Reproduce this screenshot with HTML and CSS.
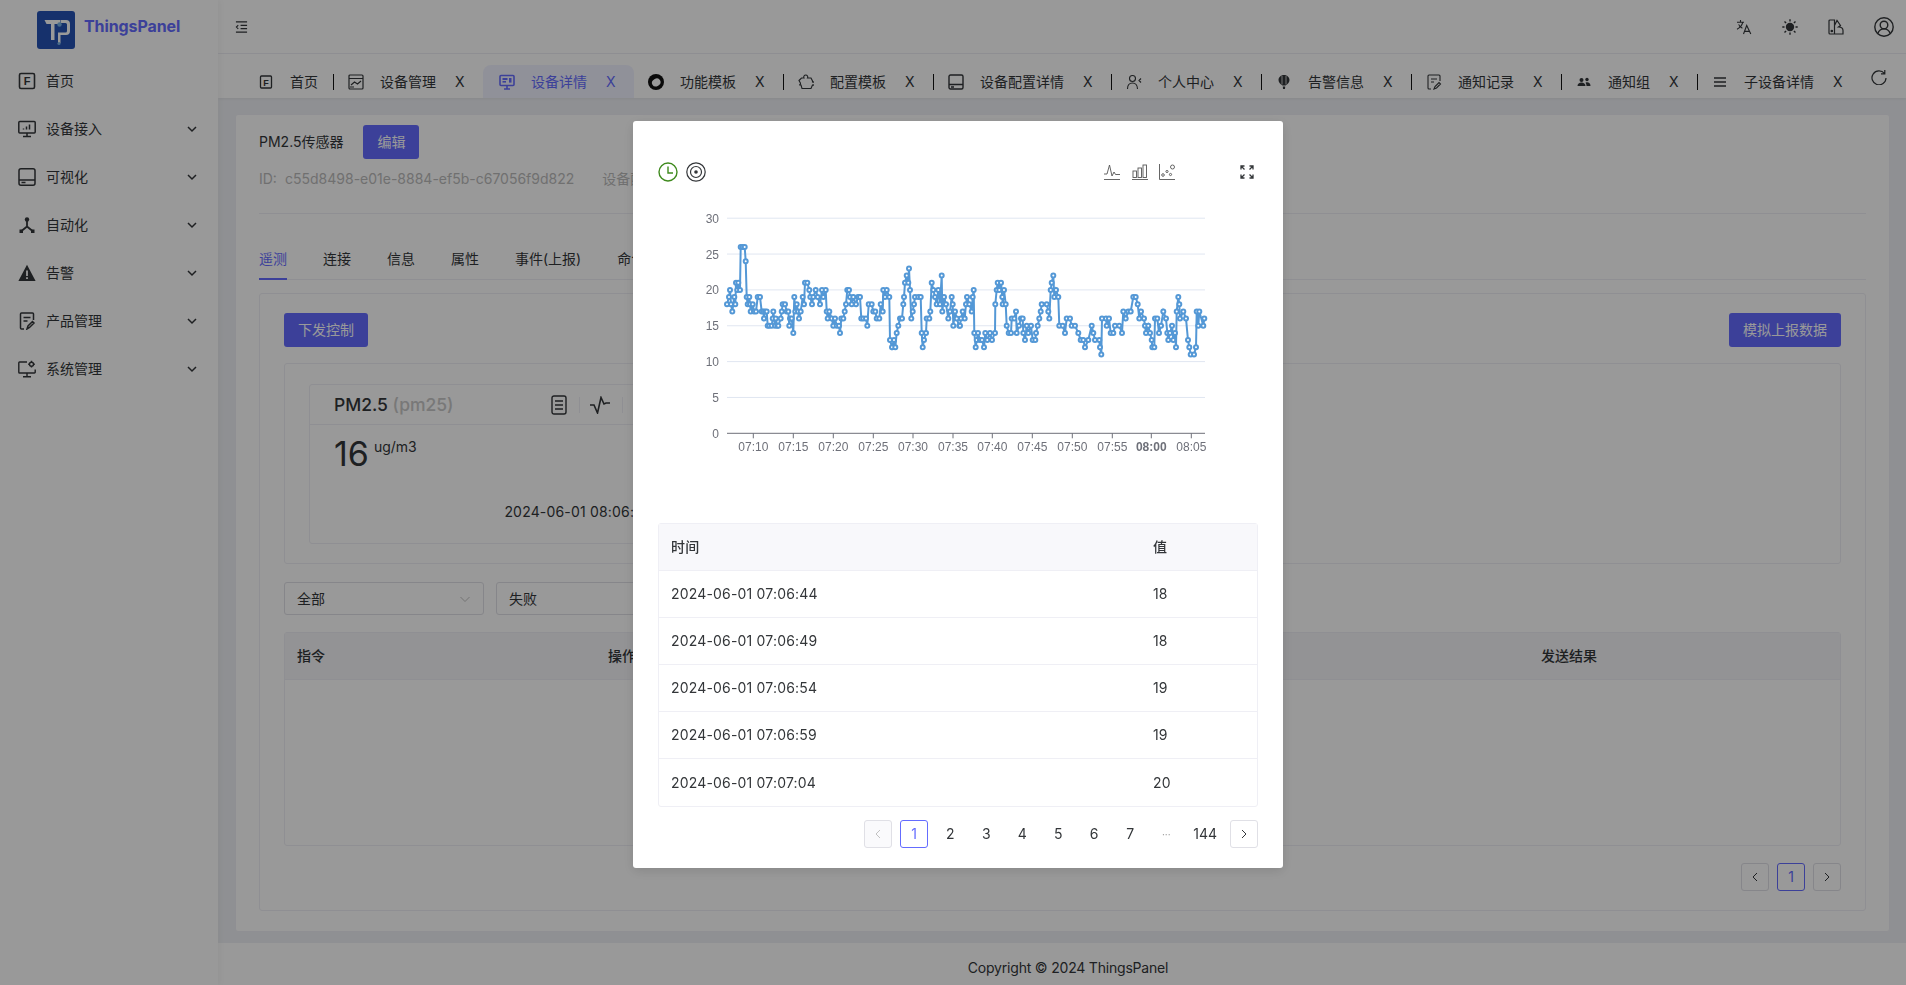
FILE: index.html
```html
<!DOCTYPE html>
<html lang="zh-CN">
<head>
    <meta charset="UTF-8">
    <meta name="viewport" content="width=device-width, initial-scale=1.0">
    <title>ThingsPanel</title>
    <link rel="stylesheet" href="styles.css">
</head>
<body>
<div class="app">
    <aside class="sidebar">
        <div class="brand">
            <svg class="brand-logo" viewBox="0 0 38 38">
                <rect width="38" height="38" rx="3" fill="#2553b5"/>
                <path d="M7.5 9H23V13H17.500V29H14V13H9.500z" fill="#fff"/>
                <path d="M23.5 9H29a4 4 0 0 1 4 4v7a4 4 0 0 1-4 4H23.500v8H21V21.500H28.500a1.500 1.500 0 0 0 1.500-1.500V13.500a1.500 1.500 0 0 0-1.500-1.500H23.500z" fill="#fff"/>
                <circle cx="22.5" cy="13.5" r="2.2" fill="#7ab4e6"/>
                <circle cx="22" cy="32.5" r="1.6" fill="#7ab4e6"/>
            </svg>
            <span class="brand-name">ThingsPanel</span>
        </div>
        <nav class="menu">
            <div class="menu-item">
                <svg class="menu-ico" viewBox="0 0 18 18"><rect x="1.5" y="1.5" width="15" height="15" rx="1.5" fill="none" stroke="currentColor" stroke-width="1.6"/><text x="9" y="13" text-anchor="middle" class="ico-letter">F</text></svg>
                <span>首页</span>
            </div>
            <div class="menu-item">
                <svg class="menu-ico" viewBox="0 0 18 18" fill="none" stroke="currentColor" stroke-width="1.5"><rect x="0.8" y="1.5" width="16.4" height="11.5" rx="1"/><path d="M9 13v3M5 16.6h8M5.5 9.5v-1M8.5 9.5v-3M11.5 9.5v-5"/></svg>
                <span>设备接入</span>
                <svg class="chev" viewBox="0 0 12 12"><path d="M2 4l4 4 4-4" fill="none" stroke="currentColor" stroke-width="1.5"/></svg>
            </div>
            <div class="menu-item">
                <svg class="menu-ico" viewBox="0 0 18 18" fill="none" stroke="currentColor" stroke-width="1.5"><rect x="1" y="0.8" width="16" height="16.4" rx="2"/><path d="M1 12h16M3.5 14.6h4"/></svg>
                <span>可视化</span>
                <svg class="chev" viewBox="0 0 12 12"><path d="M2 4l4 4 4-4" fill="none" stroke="currentColor" stroke-width="1.5"/></svg>
            </div>
            <div class="menu-item">
                <svg class="menu-ico" viewBox="0 0 18 18"><circle cx="9" cy="3.5" r="2.2" fill="currentColor"/><path d="M9 5v5.5L3.5 15M9 10.5l5.5 4.5" fill="none" stroke="currentColor" stroke-width="1.8"/><rect x="1.5" y="13.5" width="3.5" height="3.5" fill="currentColor"/><rect x="13" y="13.5" width="3.5" height="3.5" fill="currentColor"/></svg>
                <span>自动化</span>
                <svg class="chev" viewBox="0 0 12 12"><path d="M2 4l4 4 4-4" fill="none" stroke="currentColor" stroke-width="1.5"/></svg>
            </div>
            <div class="menu-item">
                <svg class="menu-ico" viewBox="0 0 18 18"><path fill-rule="evenodd" fill="currentColor" d="M9 0.8L17.6 17H0.4zM8.1 6.5v5.5h1.8V6.5zM8.1 13.2v1.8h1.8v-1.8z"/></svg>
                <span>告警</span>
                <svg class="chev" viewBox="0 0 12 12"><path d="M2 4l4 4 4-4" fill="none" stroke="currentColor" stroke-width="1.5"/></svg>
            </div>
            <div class="menu-item">
                <svg class="menu-ico" viewBox="0 0 18 18" fill="none" stroke="currentColor" stroke-width="1.5"><path d="M6 17H3.5a1 1 0 0 1-1-1V2a1 1 0 0 1 1-1h11a1 1 0 0 1 1 1v6M5.5 5.5h7M5.5 9h4M9 17l1-3 4.5-4.5 1.5 1.5-4.5 4.5z"/></svg>
                <span>产品管理</span>
                <svg class="chev" viewBox="0 0 12 12"><path d="M2 4l4 4 4-4" fill="none" stroke="currentColor" stroke-width="1.5"/></svg>
            </div>
            <div class="menu-item">
                <svg class="menu-ico" viewBox="0 0 18 18" fill="none" stroke="currentColor" stroke-width="1.4"><path d="M9 2H1.6a.8.8 0 0 0-.8.8v9.4a.8.8 0 0 0 .8.8h14.8a.8.8 0 0 0 .8-.8V9.5M9 13v3.2M5 16.8h8"/><circle cx="13.5" cy="4.2" r="2"/><path d="M13.5 0.8v1.2M13.5 6.4v1.2M10.2 4.2h1.2M15.6 4.2h1.2"/></svg>
                <span>系统管理</span>
                <svg class="chev" viewBox="0 0 12 12"><path d="M2 4l4 4 4-4" fill="none" stroke="currentColor" stroke-width="1.5"/></svg>
            </div>
        </nav>
    </aside>

    <div class="main">
        <header class="topbar">
            <svg class="top-toggle" viewBox="0 0 14 14" fill="none" stroke="currentColor" stroke-width="1.2"><path d="M1 1.5h12M6 5.2h7M6 8.8h7M1 12.5h12M3.5 5L1.5 7l2 2"/></svg>
            <div class="top-actions">
                <svg class="top-ico" viewBox="0 0 16 16" fill="none" stroke="currentColor" stroke-width="1.1"><path d="M1 3.2h7M4.5 1v2.2M6.8 3.2C6 6.5 4 8.8 1 10.2M2.6 5.4c.8 1.8 2 3 3.8 3.9M7.5 15l3.2-8.5L14.8 15M8.7 12.4h4.9"/></svg>
                <svg class="top-ico" viewBox="0 0 16 16"><circle cx="8" cy="8" r="4.2" fill="currentColor"/><path d="M8 .3v2.2M8 13.5v2.2M.3 8h2.2M13.5 8h2.2M2.5 2.5l1.6 1.6M11.9 11.9l1.6 1.6M2.5 13.5l1.6-1.600M11.9 4.100l1.6-1.600" stroke="currentColor" stroke-width="1.4"/></svg>
                <svg class="top-ico" viewBox="0 0 16 16" fill="none" stroke="currentColor" stroke-width="1.2"><path d="M6.5 1H2a1 1 0 0 0-1 1v12a1 1 0 0 0 1 1h4.5zM6.5 6.5L9 1.5l3.5 5L10.5 8c2.5 0 4.5 1 4.5 3.5V15H6.5"/><circle cx="3.8" cy="12" r=".7" fill="currentColor"/></svg>
                <svg class="top-user" viewBox="0 0 20 20" fill="none" stroke="currentColor" stroke-width="1.4"><circle cx="10" cy="10" r="9.2"/><circle cx="10" cy="8" r="3.8"/><path d="M3.8 16.5c1.2-3 3.4-4.6 6.2-4.6s5 1.6 6.2 4.6"/></svg>
            </div>
        </header>

        <div class="tabbar">
            <div class="tab tab-first">
                <svg class="tab-ico" viewBox="0 0 16 16"><rect x="2.5" y="2" width="11" height="12" rx="1" fill="none" stroke="currentColor" stroke-width="1.3"/><text x="8" y="11.5" text-anchor="middle" class="ico-letter small">F</text></svg>
                <span>首页</span>
            </div>
            <div class="tab">
                <svg class="tab-ico" viewBox="0 0 16 16" fill="none" stroke="currentColor" stroke-width="1.2"><rect x="1" y="1" width="14" height="14" rx="1"/><path d="M1 4.5h14M3 11l3.5-3 3 2 3.5-3M2 13h4"/></svg>
                <span>设备管理</span>
                <span class="tab-x">X</span>
            </div>
            <div class="tab tab-active">
                <svg class="tab-ico" viewBox="0 0 16 16"><rect x="1" y="1.5" width="14" height="10" rx="1" fill="none" stroke="currentColor" stroke-width="1.6"/><rect x="3.5" y="4" width="5" height="2" fill="currentColor"/><rect x="3.5" y="7" width="3.5" height="1.6" fill="currentColor"/><rect x="10" y="4" width="2.5" height="4.6" fill="currentColor"/><path d="M8 11.5v3M5 15h6" stroke="currentColor" stroke-width="1.6"/></svg>
                <span>设备详情</span>
                <span class="tab-x">X</span>
            </div>
            <div class="tab">
                <svg class="tab-ico" viewBox="0 0 16 16"><circle cx="8" cy="8" r="8" fill="#111"/><ellipse cx="8" cy="8.5" rx="4.4" ry="3.8" fill="#fff" transform="rotate(-30 8 8)"/></svg>
                <span>功能模板</span>
                <span class="tab-x">X</span>
            </div>
            <div class="tab">
                <svg class="tab-ico" viewBox="0 0 16 16" fill="none" stroke="currentColor" stroke-width="1.1"><path d="M1 6.5L3.5 4H6a2 2 0 1 1 3.5 0H13l1.5 3v1a1.6 1.6 0 1 1 0 3L13 14.5H4l-1-3.5H1.2a1.6 1.6 0 0 0 1.2-2z"/></svg>
                <span>配置模板</span>
                <span class="tab-x">X</span>
            </div>
            <div class="tab">
                <svg class="tab-ico" viewBox="0 0 16 16" fill="none" stroke="currentColor" stroke-width="1.4"><rect x="1" y="1" width="14" height="14" rx="1.5"/><path d="M1 10.5h14M3 13h3"/></svg>
                <span>设备配置详情</span>
                <span class="tab-x">X</span>
            </div>
            <div class="tab">
                <svg class="tab-ico" viewBox="0 0 16 16" fill="none" stroke="currentColor" stroke-width="1.1"><circle cx="6.5" cy="4.5" r="3"/><path d="M1.5 15c0-4 2-6 5-6s5 2 5 6M15 4.5l-2 2 2 2"/></svg>
                <span>个人中心</span>
                <span class="tab-x">X</span>
            </div>
            <div class="tab">
                <svg class="tab-ico" viewBox="0 0 16 16"><path fill="currentColor" d="M8 1c3 0 5.500 2.200 5.500 5 0 2.500-2 4.500-4 5.500h-3C4.500 10.500 2.500 8.500 2.500 6c0-2.800 2.500-5 5.500-5zM6.800 12.500h2.400l-.2 2.500H7z"/><path d="M6 2v8.500M10 2v8.500" stroke="#fff" stroke-width=".7"/></svg>
                <span>告警信息</span>
                <span class="tab-x">X</span>
            </div>
            <div class="tab">
                <svg class="tab-ico" viewBox="0 0 16 16" fill="none" stroke="currentColor" stroke-width="1.1"><path d="M5 15H3a1 1 0 0 1-1-1V2a1 1 0 0 1 1-1h10a1 1 0 0 1 1 1v5M5 5h6M5 8h3M8 15l1-2.500 4-4 1.500 1.500-4 4z"/></svg>
                <span>通知记录</span>
                <span class="tab-x">X</span>
            </div>
            <div class="tab">
                <svg class="tab-ico" viewBox="0 0 16 16" fill="currentColor"><circle cx="5.500" cy="6" r="2"/><circle cx="11" cy="5.500" r="1.700"/><path d="M1.500 12c0-2.200 1.800-3.500 4-3.500s4 1.300 4 3.500zM10.500 12c0-1.500-.3-2.500-1-3.300.6-.3 1.100-.4 1.700-.4 1.800 0 3.300 1.200 3.300 3.700z"/></svg>
                <span>通知组</span>
                <span class="tab-x">X</span>
            </div>
            <div class="tab tab-last">
                <svg class="tab-ico" viewBox="0 0 16 16" fill="none" stroke="currentColor" stroke-width="1.4"><path d="M2 4h12M2 8h12M2 12h12"/></svg>
                <span>子设备详情</span>
                <span class="tab-x">X</span>
            </div>
            <svg class="tab-refresh" viewBox="0 0 16 16" fill="none" stroke="currentColor" stroke-width="1.2"><path d="M13.500 4.500A7 7 0 1 0 15 9M13.800 1v3.800H10"/></svg>
        </div>

        <div class="content">
            <section class="card">
                <div class="device-head">
                    <span>PM2.5传感器</span>
                    <button class="btn btn-edit">编辑</button>
                </div>
                <div class="device-meta">
                    <span class="meta-id">ID:</span>
                    <span>c55d8498-e01e-8884-ef5b-c67056f9d822</span>
                    <span class="meta-next">设备配置: 无</span>
                </div>
                <hr class="divider">
                <div class="tabs">
                    <span class="tabs-item tabs-active">遥测</span>
                    <span class="tabs-item">连接</span>
                    <span class="tabs-item">信息</span>
                    <span class="tabs-item">属性</span>
                    <span class="tabs-item">事件(上报)</span>
                    <span class="tabs-item">命令</span>
                </div>
                <div class="inner-card">
                    <div class="action-row">
                        <button class="btn">下发控制</button>
                        <button class="btn">模拟上报数据</button>
                    </div>
                    <div class="metric-panel">
                        <div class="metric-card">
                            <div class="metric-head">
                                <span class="metric-title">PM2.5 <span class="metric-key">(pm25)</span></span>
                                <svg class="metric-doc" viewBox="0 0 16 20" fill="none" stroke="currentColor" stroke-width="1.4"><rect x="1" y="1" width="14" height="18" rx="2"/><path d="M4 6h8M4 10h8M4 14h8"/></svg>
                                <span class="metric-sep"></span>
                                <svg class="metric-pulse" viewBox="0 0 20 18" fill="none" stroke="currentColor" stroke-width="1.6"><path d="M0 9h4l3.500 8L11 1.500 14 8l2-1h4"/></svg>
                                <span class="metric-sep"></span>
                            </div>
                            <div class="metric-value"><span class="metric-num">16</span><span class="metric-unit">ug/m3</span></div>
                            <div class="metric-time">2024-06-01 08:06:44</div>
                        </div>
                    </div>
                    <div class="filter-row">
                        <div class="select"><span>全部</span><svg class="select-chev" viewBox="0 0 12 12"><path d="M1.500 4l4.500 4.500L10.500 4" fill="none" stroke="currentColor"/></svg></div>
                        <div class="select"><span>失败</span><svg class="select-chev" viewBox="0 0 12 12"><path d="M1.500 4l4.500 4.500L10.500 4" fill="none" stroke="currentColor"/></svg></div>
                    </div>
                    <div class="cmd-table">
                        <div class="cmd-head">
                            <span>指令</span>
                            <span>操作类型</span>
                            <span>状态</span>
                            <span class="cmd-time">时间</span>
                            <span>发送结果</span>
                        </div>
                    </div>
                    <div class="pager pager-bg">
                        <span class="page-btn"><svg class="page-arrow" viewBox="0 0 12 12"><path d="M8 2L4 6l4 4" fill="none" stroke="currentColor"/></svg></span>
                        <span class="page-btn page-on">1</span>
                        <span class="page-btn"><svg class="page-arrow" viewBox="0 0 12 12"><path d="M4 2l4 4-4 4" fill="none" stroke="currentColor"/></svg></span>
                    </div>
                </div>
            </section>
        </div>

        <footer class="footer">Copyright © 2024 ThingsPanel</footer>
    </div>
</div>

<div class="mask">
    <div class="modal">
        <div class="modal-tools">
            <svg class="tool-clock" viewBox="0 0 20 20" fill="none" stroke="currentColor" stroke-width="1.4"><circle cx="10" cy="10" r="9"/><path d="M10 4.500V11h5"/></svg>
            <svg class="tool-target" viewBox="0 0 20 20" fill="none" stroke="#333639"><circle cx="10" cy="10" r="9.200" stroke-width="1.2"/><circle cx="10" cy="10" r="5.500" stroke-width="1.2"/><circle cx="10" cy="10" r="1.800" fill="#333639" stroke="none"/></svg>
            <svg class="tool-line" viewBox="0 0 16 16" fill="none" stroke="#555" stroke-width=".9"><path d="M0 10h3L5.500 1 8 12l2-4 1.500 2.500H16M0 15.500h16"/></svg>
            <svg class="tool-bar" viewBox="0 0 16 16" fill="none" stroke="#555" stroke-width=".9"><rect x="1" y="7" width="3.500" height="6.500"/><rect x="6" y="4" width="3.500" height="9.500"/><rect x="11" y="1" width="3.500" height="12.500"/><path d="M0 15.500h16"/></svg>
            <svg class="tool-scatter" viewBox="0 0 16 16" fill="none" stroke="#555" stroke-width=".9"><path d="M.5 0v15.500H16"/><circle cx="4" cy="11" r="1.300"/><circle cx="8" cy="7.500" r="1.100"/><circle cx="11.500" cy="10.500" r="1.100"/><circle cx="13.500" cy="3" r="2"/></svg>
            <svg class="tool-full" viewBox="0 0 14 14" fill="none" stroke="#333639" stroke-width="1.3"><path d="M1 4.500V1h3.500M1 1l3.500 3.500M13 4.500V1H9.500M13 1L9.500 4.500M1 9.500V13h3.500M1 13l3.500-3.500M13 9.500V13H9.500M13 13L9.500 9.500"/></svg>
        </div>
        <div id="chart" class="chart"></div>
        <table class="data-table">
            <thead>
                <tr><th class="col-time">时间</th><th>值</th></tr>
            </thead>
            <tbody>
                <tr><td>2024-06-01 07:06:44</td><td>18</td></tr>
                <tr><td>2024-06-01 07:06:49</td><td>18</td></tr>
                <tr><td>2024-06-01 07:06:54</td><td>19</td></tr>
                <tr><td>2024-06-01 07:06:59</td><td>19</td></tr>
                <tr><td>2024-06-01 07:07:04</td><td>20</td></tr>
            </tbody>
        </table>
        <div class="pager">
            <span class="page-btn page-off"><svg class="page-arrow" viewBox="0 0 12 12"><path d="M8 2L4 6l4 4" fill="none" stroke="currentColor"/></svg></span>
            <span class="page-btn page-on">1</span>
            <span class="page-btn page-plain">2</span>
            <span class="page-btn page-plain">3</span>
            <span class="page-btn page-plain">4</span>
            <span class="page-btn page-plain">5</span>
            <span class="page-btn page-plain">6</span>
            <span class="page-btn page-plain">7</span>
            <span class="page-btn page-plain page-dots">···</span>
            <span class="page-btn page-plain">144</span>
            <span class="page-btn"><svg class="page-arrow" viewBox="0 0 12 12"><path d="M4 2l4 4-4 4" fill="none" stroke="currentColor"/></svg></span>
        </div>
    </div>
</div>
<script src="chart.js"></script>
</body>
</html>
```
FILE: styles.css
```css
* {
    box-sizing: border-box;
}
body {
    margin: 0;
    height: 985px;
    overflow: hidden;
    font-family: Inter, "Noto Sans CJK SC", sans-serif;
    font-size: 14px;
    line-height: 22px;
    color: #333639;
    background: #fff;
}
svg {
    display: block;
    flex: none;
}
.ico-letter {
    font-family: "Liberation Sans", sans-serif;
    font-size: 11px;
    font-weight: 700;
    fill: currentColor;
}
.ico-letter.small {
    font-size: 9px;
}
.app {
    display: flex;
    height: 985px;
}

/* sidebar */
.sidebar {
    width: 218px;
    flex: none;
    background: #fff;
    box-shadow: 2px 0 6px rgba(0, 0, 0, .04);
    z-index: 1;
}
.brand {
    height: 60px;
    padding: 11px 0 0 37px;
    display: flex;
    gap: 9px;
}
.brand-logo {
    width: 38px;
    height: 38px;
}
.brand-name {
    font-size: 16px;
    font-weight: 700;
    line-height: 30px;
    letter-spacing: -.1px;
    color: #646cff;
}
.menu-item {
    height: 42px;
    margin-bottom: 6px;
    padding: 0 20px 0 18px;
    display: flex;
    align-items: center;
    gap: 10px;
}
.menu-ico {
    width: 18px;
    height: 18px;
}
.chev {
    width: 12px;
    height: 12px;
    margin-left: auto;
}

/* right side */
.main {
    flex: 1;
    min-width: 0;
    display: flex;
    flex-direction: column;
    background: #eff1f5;
}
.topbar {
    height: 54px;
    flex: none;
    padding: 0 12px 0 17px;
    display: flex;
    align-items: center;
    justify-content: space-between;
    background: #fff;
    border-bottom: 1px solid #efeff5;
}
.top-toggle {
    width: 13px;
    height: 14px;
}
.top-actions {
    display: flex;
    align-items: center;
    gap: 30px;
}
.top-ico {
    width: 16px;
    height: 16px;
}
.top-user {
    width: 20px;
    height: 20px;
}

.tabbar {
    height: 44px;
    flex: none;
    padding: 11px 0 0 26px;
    display: flex;
    background: #fff;
    box-shadow: 0 1px 3px rgba(0, 0, 0, .06);
    position: relative;
}
.tab {
    height: 33px;
    padding: 0 20px 0 14px;
    display: flex;
    align-items: center;
    position: relative;
    flex: none;
    white-space: nowrap;
}
.tab::after {
    content: "";
    position: absolute;
    right: 0;
    top: 9px;
    width: 1px;
    height: 16px;
    background: #111;
}
.tab-first {
    padding-right: 16px;
}
.tab-active {
    color: #646cff;
    background: #f1f2ff;
    border-radius: 8px 8px 0 0;
    padding-left: 16px;
    padding-right: 19px;
    margin-left: -1px;
}
.tab-active::after,
.tab-last::after {
    display: none;
}
.tab-ico {
    width: 16px;
    height: 16px;
    margin-right: 16px;
}
.tab-x {
    width: 9px;
    margin-left: 19px;
}
.tab-refresh {
    position: absolute;
    right: 19px;
    top: 15px;
    width: 16px;
    height: 16px;
}

.content {
    flex: 1;
    min-height: 0;
    padding: 16px 16px 11px 17px;
    display: flex;
}
.card {
    flex: 1;
    min-width: 0;
    padding: 10px 23px 0;
    background: #fff;
    border: 1px solid #efeff5;
    border-radius: 3px;
}
.device-head {
    display: flex;
    align-items: center;
    gap: 20px;
    height: 34px;
}
.btn {
    height: 34px;
    padding: 0 14px;
    border: 0;
    border-radius: 3px;
    background: #646cff;
    color: #fff;
    font: inherit;
}
.btn-edit {
    width: 56px;
    padding: 0;
}
.device-meta {
    margin-top: 9px;
    display: flex;
    color: #bbb;
}
.meta-id {
    width: 26px;
}
.meta-next {
    margin-left: 28px;
}
.divider {
    margin: 23px 0 0;
    border: 0;
    border-top: 1px solid #efeff5;
}
.tabs {
    margin-top: 34px;
    display: flex;
    gap: 36px;
    border-bottom: 1px solid #efeff5;
}
.tabs-item {
    height: 31px;
    padding-bottom: 9px;
    position: relative;
}
.tabs-active {
    color: #646cff;
}
.tabs-active::after {
    content: "";
    position: absolute;
    left: 0;
    right: 0;
    bottom: -1px;
    height: 2px;
    background: #646cff;
}
.inner-card {
    margin-top: 13px;
    padding: 19px 24px 0;
    height: 618px;
    border: 1px solid #efeff5;
    border-radius: 3px;
}
.action-row {
    display: flex;
    justify-content: space-between;
}
.metric-panel {
    margin-top: 16px;
    height: 201px;
    padding: 20px 24px;
    border: 1px solid #efeff5;
    border-radius: 3px;
}
.metric-card {
    width: 539px;
    height: 160px;
    border: 1px solid #efeff5;
    border-radius: 3px;
    padding: 0 24px;
}
.metric-head {
    height: 40px;
    margin: 0 -24px;
    padding: 0 24px;
    display: flex;
    align-items: center;
    border-bottom: 1px solid #efeff5;
}
.metric-title {
    font-size: 17.5px;
    font-weight: 500;
    width: 217px;
}
.metric-key {
    color: #c8c8c8;
}
.metric-doc {
    width: 16px;
    height: 20px;
}
.metric-sep {
    width: 1px;
    height: 16px;
    margin: 0 10px 0 12px;
    background: #efeff5;
}
.metric-pulse {
    width: 20px;
    height: 18px;
}
.metric-value {
    margin-top: 10px;
    display: flex;
    align-items: flex-start;
}
.metric-num {
    font-size: 34px;
    line-height: 38px;
}
.metric-unit {
    margin: 1px 0 0 5px;
    line-height: 22px;
}
.metric-time {
    margin-top: 28px;
    text-align: center;
    letter-spacing: .18px;
}
.filter-row {
    margin-top: 18px;
    display: flex;
    gap: 12px;
}
.select {
    width: 200px;
    height: 33px;
    padding: 0 12px;
    display: flex;
    align-items: center;
    justify-content: space-between;
    border: 1px solid #e0e0e6;
    border-radius: 3px;
}
.select-chev {
    width: 12px;
    height: 12px;
    color: #c2c2c2;
}
.cmd-table {
    margin-top: 17px;
    height: 214px;
    border: 1px solid #efeff5;
    border-radius: 3px;
}
.cmd-head {
    display: grid;
    grid-template-columns: repeat(5, 1fr);
    height: 47px;
    background: #f5f5f8;
    border-bottom: 1px solid #efeff5;
    font-weight: 500;
    line-height: 46px;
}
.cmd-head span {
    padding-left: 12px;
}
.cmd-head .cmd-time {
    padding-left: 26px;
}
.pager {
    margin-top: 13px;
    display: flex;
    justify-content: flex-end;
    gap: 8px;
}
.pager-bg {
    margin-top: 17px;
}
.page-btn {
    min-width: 28px;
    height: 28px;
    padding: 0 4px;
    display: flex;
    align-items: center;
    justify-content: center;
    border: 1px solid #e0e0e6;
    border-radius: 3px;
    line-height: 26px;
}
.page-arrow {
    width: 12px;
    height: 12px;
}
.page-on {
    color: #646cff;
    border-color: #646cff;
}
.page-off {
    background: #fafafc;
    color: #c2c2c2;
}
.page-plain {
    border-color: transparent;
}
.page-dots {
    color: #999;
    font-size: 10px;
}

.footer {
    height: 42px;
    flex: none;
    padding: 14px 0 0 12px;
    text-align: center;
    letter-spacing: -.2px;
    background: #fff;
}

/* modal over the dimmed page */
.mask {
    position: fixed;
    inset: 0;
    z-index: 10;
    background: rgba(0, 0, 0, .4);
}
.modal {
    position: absolute;
    left: 633px;
    top: 121px;
    width: 650px;
    height: 747px;
    padding: 41px 25px 0;
    background: #fff;
    border-radius: 3px;
    box-shadow: 0 3px 12px rgba(0, 0, 0, .12);
}
.modal-tools {
    height: 20px;
    display: flex;
    align-items: center;
}
.tool-clock {
    width: 20px;
    height: 20px;
    color: #3f8a1e;
}
.tool-target {
    width: 20px;
    height: 20px;
    margin-left: 8px;
}
.tool-line,
.tool-bar,
.tool-scatter {
    width: 16px;
    height: 16px;
}
.tool-line {
    margin-left: 398px;
}
.tool-bar {
    margin-left: 12px;
}
.tool-scatter {
    margin-left: 11px;
}
.tool-full {
    width: 14px;
    height: 14px;
    margin-left: 65px;
}
.chart {
    margin-top: 18px;
    height: 300px;
}
.chart svg {
    width: 600px;
    height: 300px;
}
.chart text {
    font-family: "Liberation Sans", sans-serif;
    font-size: 12px;
    fill: #6e7079;
}
.chart .tick-bold {
    font-weight: 700;
}
.data-table {
    margin-top: 23px;
    width: 100%;
    border-collapse: separate;
    border-spacing: 0;
    border: 1px solid #efeff5;
    border-radius: 3px;
    table-layout: fixed;
    letter-spacing: .18px;
}
.data-table th,
.data-table td {
    height: 47px;
    padding: 0 12px;
    text-align: left;
    border-bottom: 1px solid #efeff5;
}
.data-table th {
    background: #f8f8fb;
    font-weight: 500;
}
.data-table tr:last-child td {
    border-bottom: 0;
}
.col-time {
    width: 482px;
}
```
FILE: chart.js
```js
// pm25 readings as [x, value], x counted in thirds of a pixel from the left of the plot crop
var readings = [
    [231,18],[237,19],[240,20],[243,18],[247,17],[253,19],[256,18],[258,21],[262,20],[265,21],[270,20],[272,26],[278,26],[284,26],[287,24],[290,19],[293,18],[298,19],[300,18],[302,17],[308,18],[312,17],[318,17],[323,19],[330,19],[335,17],[340,17],[342,16],[345,17],[350,17],[353,15],[358,15],[365,15],[368,16],[370,17],[375,15],[377,16],[382,15],[385,15],[392,16],[395,17],[398,18],[405,18],[410,17],[415,17],[418,15],[420,16],[425,16],[430,14],[433,19],[436,17],[440,18],[444,17],[447,16],[452,17],[458,19],[462,18],[465,21],[472,21],[478,20],[481,19],[486,18],[490,19],[497,20],[503,19],[510,18],[516,20],[520,19],[527,20],[530,17],[533,16],[538,17],[545,16],[550,15],[555,16],[560,15],[567,15],[570,14],[574,16],[580,16],[584,17],[588,18],[592,20],[597,20],[600,19],[605,18],[610,19],[618,18],[624,19],[630,19],[634,16],[640,16],[648,16],[652,15],[656,18],[665,18],[670,17],[676,17],[680,16],[688,16],[692,18],[698,17],[700,20],[705,19],[710,20],[718,19],[720,13],[726,12],[732,13],[736,12],[740,14],[745,15],[750,16],[756,16],[760,18],[762,19],[765,21],[770,22],[775,21],[777,23],[780,20],[784,16],[788,17],[792,18],[795,19],[805,19],[812,19],[815,14],[818,12],[822,13],[828,14],[830,16],[838,16],[841,17],[845,21],[850,20],[855,19],[860,18],[865,20],[870,18],[875,22],[877,17],[882,19],[888,18],[895,16],[900,17],[905,19],[908,18],[910,15],[915,17],[920,16],[928,15],
    [930,15],[933,16],[938,17],[944,16],[948,18],[951,19],[958,18],[965,17],[968,19],[971,20],[973,14],[977,12],[980,13],[984,14],[990,13],[996,13],[1002,12],[1006,14],[1012,13],[1020,14],[1026,13],[1035,14],[1036,18],[1040,20],[1043,21],[1048,20],[1053,21],[1057,19],[1058,18],[1062,20],[1067,18],[1070,15],[1076,14],[1083,14],[1085,16],[1093,16],[1098,17],[1100,14],[1107,15],[1113,16],[1118,16],[1120,14],[1125,13],[1130,15],[1135,14],[1143,15],[1148,13],[1156,13],[1158,14],[1163,15],[1168,16],[1172,17],[1175,18],[1190,18],[1195,17],[1198,16],[1202,20],[1205,21],[1210,22],[1213,19],[1218,20],[1225,19],[1228,15],[1238,15],[1245,14],[1250,16],[1260,16],[1265,15],[1275,15],[1285,14],[1292,13],[1300,13],[1305,12],[1315,13],[1325,15],[1330,14],[1335,13],[1348,13],[1350,12],[1354,11],[1356,16],[1368,16],[1370,15],[1377,16],[1382,14],[1390,14],[1395,15],[1408,15],[1416,14],[1420,17],[1427,16],[1435,17],[1442,17],[1450,19],[1457,19],[1463,18],[1468,16],[1473,17],[1482,16],[1485,15],[1488,14],[1495,15],[1500,14],[1505,13],[1507,12],[1513,12],[1515,16],[1522,16],[1527,14],[1533,15],[1540,17],[1548,16],[1552,14],[1555,13],[1560,14],[1566,15],[1570,13],[1575,14],[1578,12],[1580,17],[1585,19],[1588,18],[1590,16],[1600,17],[1608,16],[1614,13],[1618,12],[1622,11],[1632,11],[1638,12],[1640,17],[1645,15],[1648,17],[1660,15],[1663,16]
];

var xLabels = [
    ["07:10", 753.3], ["07:15", 793.3], ["07:20", 833.3], ["07:25", 873.3],
    ["07:30", 913], ["07:35", 953], ["07:40", 992.3], ["07:45", 1032.3],
    ["07:50", 1072.3], ["07:55", 1112.3], ["08:00", 1151.3], ["08:05", 1191.3]
];

function valueY(v) {
    return 433.3 - v * 7.17;
}

// The viewBox uses page coordinates, so the plot numbers read the same as the screen
function drawChart() {
    var html = '<svg viewBox="658 200 600 300">';
    var i;

    for (i = 0; i <= 6; i++) {
        var y = valueY(i * 5);
        if (i > 0) {
            html += '<line x1="727" x2="1205" y1="' + y + '" y2="' + y + '" stroke="#e0e6f1"/>';
        }
        html += '<text x="719" y="' + (y + 4.5) + '" text-anchor="end">' + (i * 5) + '</text>';
    }

    html += '<line x1="727" x2="1205" y1="433.3" y2="433.3" stroke="#6e7079"/>';
    for (i = 0; i < xLabels.length; i++) {
        var x = xLabels[i][1];
        var bold = xLabels[i][0] == "08:00" ? ' class="tick-bold"' : '';
        html += '<line x1="' + x + '" x2="' + x + '" y1="433.3" y2="438.3" stroke="#6e7079"/>';
        html += '<text x="' + x + '" y="451"' + bold + ' text-anchor="middle">' + xLabels[i][0] + '</text>';
    }

    var points = [];
    var dots = '';
    for (i = 0; i < readings.length; i++) {
        var px = (650 + readings[i][0] / 3).toFixed(1);
        var py = valueY(readings[i][1]).toFixed(1);
        points.push(px + ',' + py);
        dots += '<circle cx="' + px + '" cy="' + py + '" r="2"/>';
    }
    html += '<polyline points="' + points.join(' ') + '" fill="none" stroke="#5498d6" stroke-width="2"/>';
    html += '<g fill="#fff" stroke="#5498d6" stroke-width="2">' + dots + '</g>';

    document.getElementById("chart").innerHTML = html + '</svg>';
}

drawChart();
```
